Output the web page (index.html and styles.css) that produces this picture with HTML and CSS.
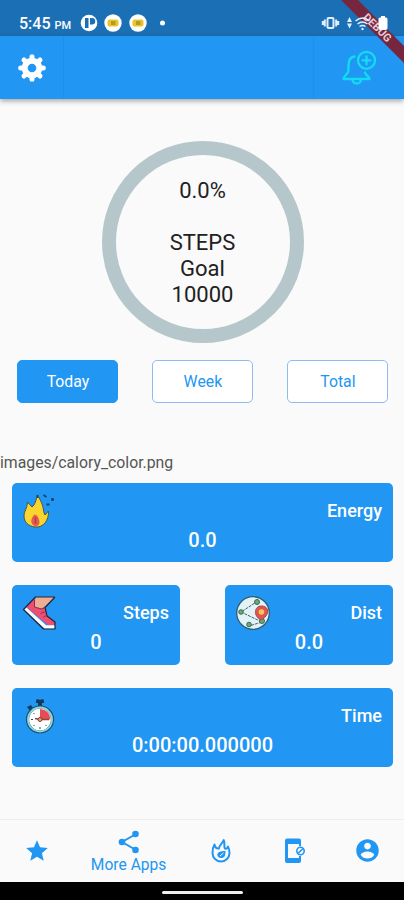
FILE: index.html
```html
<!DOCTYPE html>
<html lang="en">

<head>
    <meta charset="UTF-8">
    <meta name="viewport" content="width=device-width, initial-scale=1.0">
    <title>Steps</title>
    <link rel="stylesheet" href="styles.css">
</head>

<body>
    <div class="screen">
        <div class="debug">
            <svg width="70" height="70" viewBox="0 0 70 70">
                <path d="M7 0H24L70 46V63Z" fill="#76273f" />
                <text class="debug-text" transform="translate(43.5 27.5) rotate(45)" x="0" y="4" text-anchor="middle">DEBUG</text>
            </svg>
        </div>

        <div class="status-bar">
            <div class="clock">5:45 <small>PM</small></div>
            <svg class="notifications" width="90" height="20" viewBox="0 0 90 20">
                <circle cx="9" cy="10" r="8.3" fill="#fff" />
                <path d="M5 5h3.500v10H5zM10 5h2a3 3 0 0 1 0 6.500h-2z" fill="#1b6fb5" />
                <circle cx="33" cy="10" r="8.700" fill="#fff" />
                <rect x="27.500" y="6.500" width="11" height="7" rx="2" fill="#e6c62c" />
                <rect x="31" y="8" width="4.500" height="4" fill="#b99a1c" />
                <circle cx="58" cy="10" r="8.700" fill="#fff" />
                <rect x="52.500" y="6.500" width="11" height="7" rx="2" fill="#e6c62c" />
                <rect x="56" y="8" width="4.500" height="4" fill="#b99a1c" />
                <circle cx="82.500" cy="10" r="2.500" fill="#fff" />
            </svg>
            <svg class="system" width="70" height="20" viewBox="0 0 70 20">
                <g fill="none" stroke="#dfeeff" stroke-width="2">
                    <rect x="6.500" y="5" width="6" height="10" rx="1" />
                    <path d="M3.800 6.500v7M1.800 8v4M15.200 6.500v7M17.200 8v4" />
                </g>
                <path d="M28.500 4l2.500 5h-5zM28.500 15.500l2.500-5h-5z" fill="#dfeeff" />
                <g fill="none" stroke="#dfeeff" stroke-width="1.500">
                    <path d="M34.500 8q7-6 14 0M36.500 11q5-4 10 0M38.500 13.500q3-2 6 0" />
                </g>
                <circle cx="41.500" cy="16" r="1.200" fill="#dfeeff" />
                <path d="M60 3h4v1.500h1a1.500 1.500 0 0 1 1.500 1.500v9a2 2 0 0 1-2 2h-5a2 2 0 0 1-2-2V6a1.500 1.500 0 0 1 1.500-1.500h1z" fill="#fff" />
            </svg>
        </div>

        <div class="app-bar">
            <div class="settings">
                <svg width="28" height="28" viewBox="0 0 28 28">
                    <circle cx="14" cy="14" r="7.300" fill="none" stroke="#fff" stroke-width="6" />
                    <g stroke="#fff" stroke-width="5" stroke-linecap="round">
                        <path d="M14 2.700v3M14 22.300v3M2.700 14h3M22.300 14h3M6 6l2 2M20 20l2 2M22 6l-2 2M8 20l-2 2" />
                    </g>
                </svg>
            </div>
            <div class="reminder">
                <svg width="36" height="36" viewBox="0 0 36 36" fill="none" stroke="#12dcf4" stroke-width="2.300" stroke-linecap="round" stroke-linejoin="round">
                    <path d="M13.500 6.500C8.500 7.500 7.500 11 7.500 15v5.500c0 3-5 5.500-5 8.500h26c0-2.500-3.500-3-4.500-6.500" />
                    <path d="M11.500 29.500c.5 5.300 8 5.300 8.500 0" />
                    <circle cx="25.500" cy="10.300" r="8.500" />
                    <path d="M25.500 6.300v8M21.500 10.300h8" />
                </svg>
            </div>
        </div>

        <div class="content">
            <div class="goal">0.0%<br><br>STEPS<br>Goal<br>10000</div>

            <div class="tabs">
                <button class="tab active">Today</button>
                <button class="tab">Week</button>
                <button class="tab">Total</button>
            </div>

            <div class="path">images/calory_color.png</div>

            <div class="cards">
                <div class="card wide">
                    <svg width="36" height="36" viewBox="0 0 36 36">
                        <path d="M13 34C6 33 2 29 2 23c0-5 3-7 3.500-14l4.500 5c3-2 4-7 5.500-12 2 4 5 8 6 15 0 2 1 4 1.500 5l3.500-4c.5 9-5 17-13.500 16z" fill="#fdd32d" stroke="#3c5a50" />
                        <path d="M13.500 33.500c-6-2-5-8-1-12 3 0 5 5 5 8 0 2-2 4-4 4z" fill="#e95a4c" />
                        <path d="M13.500 24v7" stroke="#9d4658" stroke-width="1.500" />
                        <path d="M21.500 2l3 2M29 6.500h3M30.500 5v3M24.500 11.500h3M15.500 2v3" stroke="#15436d" stroke-width="1.800" />
                    </svg>
                    <h3>Energy</h3>
                    <p>0.0</p>
                </div>
                <div class="card">
                    <svg width="36" height="36" viewBox="0 0 36 36">
                        <path d="M13.500 2H33L23.500 11l-4 2.500-7-1z" fill="#edae91" />
                        <path d="M12 4l.5 8 7 2 3.500-2 1.500 8L32 26l1 4h-7L4 12z" fill="#ef4d71" />
                        <path d="M3 13.500L23.500 32H33" fill="none" stroke="#fff" stroke-width="3.400" />
                        <path d="M33 2H13.500L1.500 14.500 21.500 34H33v-7l-8-6-2-8.500L33 2" fill="none" stroke="#262436" stroke-width="1.200" stroke-linejoin="round" />
                        <path d="M12.500 5v7l7 2 3.500-1.500M18.500 18.500l4-1.500M21.500 22l3.500-2" fill="none" stroke="#8c2f4d" />
                    </svg>
                    <h3>Steps</h3>
                    <p>0</p>
                </div>
                <div class="card">
                    <svg width="36" height="36" viewBox="0 0 36 36">
                        <circle cx="18" cy="18" r="16.300" fill="#e2f3f8" stroke="#315c78" stroke-width="1.300" />
                        <path d="M23 6L6 17l21 10-13 4" fill="none" stroke="#505d65" stroke-dasharray="3 1" />
                        <g fill="#6fa876" stroke="#31704d">
                            <circle cx="22" cy="7" r="2.500" />
                            <circle cx="6" cy="17" r="2.300" />
                            <circle cx="14" cy="29.500" r="2.300" />
                            <circle cx="27" cy="26" r="2.500" />
                        </g>
                        <path d="M26 25c-8-4-7-14 .500-14 8 0 8.500 9.500-.500 14z" fill="#df5550" stroke="#a44750" />
                        <circle cx="26.500" cy="17" r="2.800" fill="#f7c458" />
                    </svg>
                    <h3>Dist</h3>
                    <p>0.0</p>
                </div>
                <div class="card wide">
                    <svg width="36" height="36" viewBox="0 0 36 36">
                        <path d="M14 2l2-1 2 1 2-1 2 1v3h-2v4h-4V5h-2zM5 9l4-2 2 3-3 3z" fill="#143b62" />
                        <circle cx="18" cy="21.500" r="12.500" fill="#fff" stroke="#1e5377" stroke-width="3.200" />
                        <circle cx="18" cy="21.500" r="12" fill="none" stroke="#8edbd8" stroke-width="1.800" />
                        <path d="M18 21.500V11a10.500 10.500 0 0 1 10.500 10.500z" fill="#e84b55" />
                        <path d="M13 20.500l5 1h9" fill="none" stroke="#8b493d" stroke-width="1.500" />
                        <circle cx="18" cy="21.500" r="2" fill="#e9a45b" stroke="#713e38" />
                        <path d="M18 29v2M9 21.500h2M11.500 28l1-1M24.500 28l-1-1M11.500 15l1 1" stroke="#274e6d" />
                    </svg>
                    <h3>Time</h3>
                    <p>0:00:00.000000</p>
                </div>
            </div>
        </div>

        <div class="bottom-nav">
            <div class="nav-item">
                <svg width="26" height="26" viewBox="0 0 24 24">
                    <path d="M12 17.270L18.180 21l-1.640-7.030L22 9.240l-7.190-.61L12 2 9.190 8.630 2 9.240l5.460 4.730L5.820 21z" />
                </svg>
            </div>
            <div class="nav-item selected">
                <svg width="26" height="26" viewBox="0 0 26 26">
                    <path d="M20 5L6 13l14 8" fill="none" stroke="#2196f3" stroke-width="2" />
                    <circle cx="19.500" cy="5" r="3.300" />
                    <circle cx="6" cy="13" r="3.300" />
                    <circle cx="19.500" cy="21" r="3.300" />
                </svg>
                <span>More Apps</span>
            </div>
            <div class="nav-item">
                <svg width="26" height="26" viewBox="0 0 26 26">
                    <path d="M6.500 6.500C5 9 4.500 11 4.500 15a8.500 8.500 0 0 0 17 0c0-2.500-.4-4.500-1.600-6.500-.4 1.500-1.200 2.300-2.200 2.300C15 10.500 17.500 5 15.700 2c-.7 3-4.700 5-4.700 8.500-2.500.3-4-1.500-4.500-4z" fill="none" stroke="#2196f3" stroke-width="2" stroke-linejoin="round" />
                    <path d="M17.500 13c0 5-1 7-4.500 7-2.200 0-3.700-1.300-3.700-3.200 0-2.800 3.700-3.800 8.200-3.800z" />
                    <path d="M12 18l3.500-3" stroke="#fafafa" />
                </svg>
            </div>
            <div class="nav-item">
                <svg width="26" height="26" viewBox="0 0 24 26">
                    <path d="M6 .500h11a2 2 0 0 1 2 2V8h-2V6H6v14h11v-2h2v5a2 2 0 0 1-2 2H5a2 2 0 0 1-2-2V2.500a2 2 0 0 1 2-2z" />
                    <circle cx="18.500" cy="13" r="3.700" fill="none" stroke="#2196f3" stroke-width="1.600" />
                    <path d="M16 15.500l5-5" stroke="#2196f3" stroke-width="1.600" />
                </svg>
            </div>
            <div class="nav-item">
                <svg width="27" height="27" viewBox="0 0 24 24">
                    <path d="M12 2C6.480 2 2 6.480 2 12s4.480 10 10 10 10-4.480 10-10S17.520 2 12 2zm0 3c1.660 0 3 1.340 3 3s-1.340 3-3 3-3-1.340-3-3 1.340-3 3-3zm0 14.200c-2.500 0-4.710-1.280-6-3.220.03-1.990 4-3.080 6-3.080 1.990 0 5.970 1.090 6 3.080-1.290 1.940-3.500 3.220-6 3.220z" />
                </svg>
            </div>
        </div>

        <div class="system-nav">
            <div class="handle"></div>
        </div>
    </div>
</body>

</html>
```

FILE: styles.css
```css
* {
    box-sizing: border-box;
}

body {
    margin: 0;
    background-color: #fafafa;
    font-family: Roboto, sans-serif;
}

svg {
    display: block;
    flex-shrink: 0;
}

.screen {
    position: relative;
    display: flex;
    flex-direction: column;
    width: 404px;
    height: 900px;
    overflow: hidden;
}

.debug {
    position: absolute;
    top: 0;
    right: 0;
    z-index: 1;
}

.debug-text {
    font-size: 11px;
    font-weight: 700;
    fill: #e5cbd3;
}

.status-bar {
    display: flex;
    align-items: center;
    height: 36px;
    padding: 10px 13px 0 19px;
    background-color: #1b6fb5;
    color: #fff;
}

.clock {
    width: 61px;
    font-size: 16px;
    font-weight: 500;
    white-space: nowrap;
}

.clock small {
    font-size: 11px;
}

/* system icons stay above the debug ribbon */
.system {
    position: relative;
    z-index: 2;
    margin-left: auto;
}

.app-bar {
    display: flex;
    justify-content: space-between;
    height: 63px;
    background-color: #2196f3;
    box-shadow: 0 2px 5px rgba(0, 0, 0, 0.35);
}

.settings,
.reminder {
    display: flex;
    align-items: center;
    justify-content: center;
}

.settings {
    width: 64px;
    border-right: 1px solid #2090eb;
}

.reminder {
    width: 91px;
    border-left: 1px solid #2090eb;
}

.content {
    flex: 1;
    padding-top: 42px;
}

.goal {
    display: flow-root;
    width: 202px;
    height: 202px;
    margin: 0 auto;
    margin-left: 101.5px;
    padding-top: 23px;
    border: 14px solid #b6c7cc;
    border-radius: 50%;
    color: #212121;
    font-size: 22px;
    line-height: 26px;
    text-align: center;
}

.tabs {
    display: flex;
    justify-content: space-between;
    padding: 17px 15.6px 0 17.4px;
}

.tab {
    width: 101px;
    height: 43px;
    padding: 0;
    border: 1px solid #8dbcf2;
    border-radius: 5px;
    background-color: #fff;
    color: #2196f3;
    font-family: inherit;
    font-size: 15.8px;
}

.tab.active {
    border-color: #2196f3;
    background-color: #2196f3;
    color: #fff;
}

.path {
    margin-top: 50px;
    color: #555;
    font-size: 15.8px;
    line-height: 20px;
}

.cards {
    display: grid;
    grid-template-columns: 168px 168px;
    justify-content: space-between;
    row-gap: 23px;
    padding: 10px 11px 0 12px;
}

.card {
    display: grid;
    grid-template-columns: 36px 1fr;
    grid-template-rows: 46px 24px;
    height: 79.3px;
    padding: 10px 11px 0 10px;
    border-radius: 5px;
    background-color: #2196f3;
    color: #fff;
}

.card.wide {
    grid-column: span 2;
}

.card h3 {
    margin: 7px 0 0;
    font-size: 18px;
    font-weight: 500;
    line-height: 22px;
    text-align: right;
}

.card p {
    grid-column: span 2;
    margin: -11px 0 0;
    padding-left: 1px;
    font-size: 20px;
    font-weight: 500;
    line-height: 24px;
    text-align: center;
}

.bottom-nav {
    display: flex;
    height: 63px;
    padding-bottom: 1px;
    border-top: 1px solid #eee;
    background-color: #fafafa;
}

.nav-item {
    display: flex;
    flex-direction: column;
    align-items: center;
    justify-content: center;
    width: 73.8px;
    color: #2196f3;
    fill: #2196f3;
}

.nav-item.selected {
    width: 111px;
    padding-top: 3px;
}

.nav-item span {
    font-size: 15.6px;
    line-height: 20px;
}

.system-nav {
    display: flex;
    align-items: center;
    justify-content: center;
    height: 18px;
    background-color: #000;
}

.handle {
    width: 81px;
    height: 3px;
    margin-top: 3px;
    border-radius: 2px;
    background-color: #eee;
}
```
